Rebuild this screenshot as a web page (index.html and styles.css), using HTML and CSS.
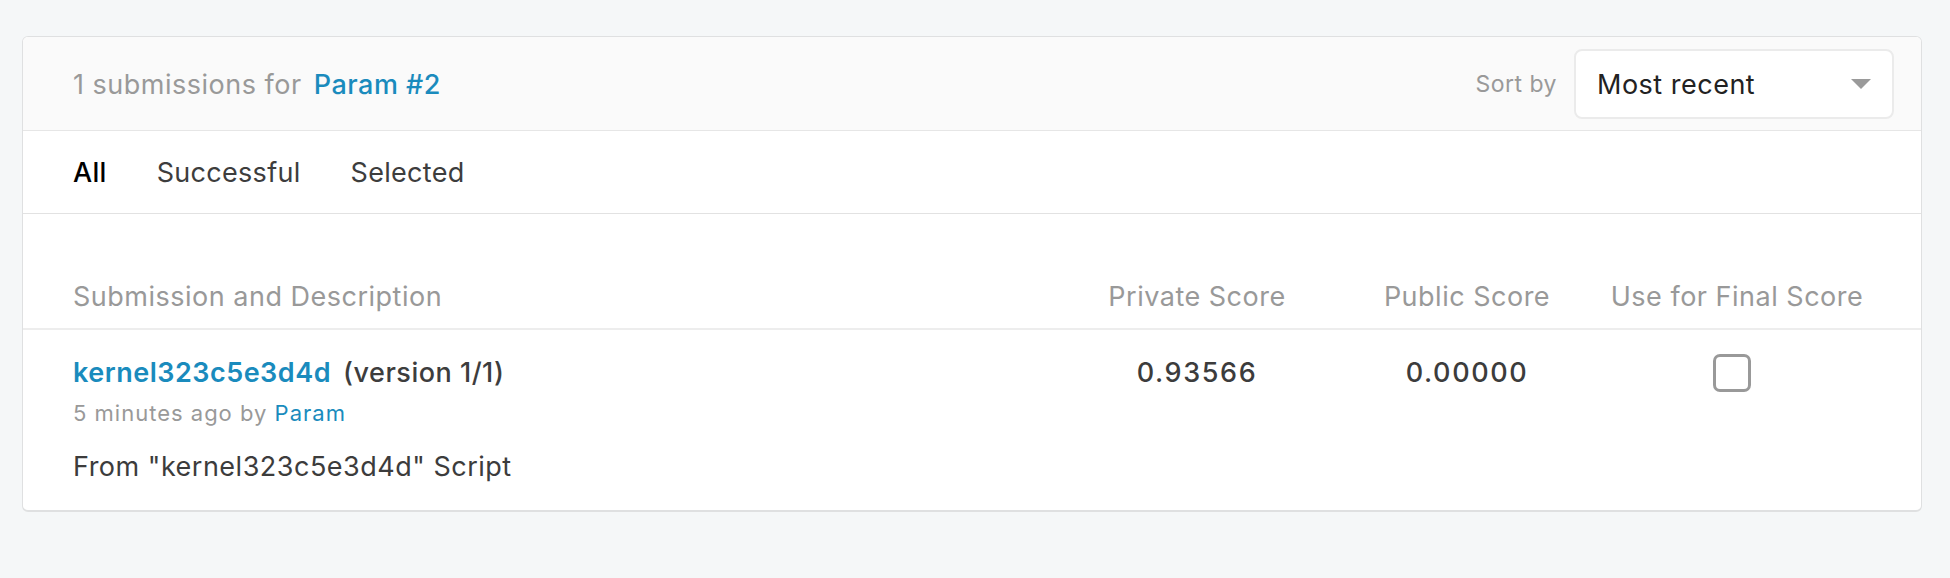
FILE: index.html
```html
<!DOCTYPE html>
<html lang="en">
<head>
<meta charset="utf-8">
<title>Submissions</title>
<link rel="stylesheet" href="styles.css">
</head>
<body>
<div class="page">
  <section class="card">
    <header class="card-header">
      <div class="count"><span class="count-label">1 submissions for</span> <a class="link team" href="#">Param #2</a></div>
      <div class="sort">
        <span class="sort-label">Sort by</span>
        <div class="select">
          <span class="select-value">Most recent</span>
          <span class="caret"></span>
        </div>
      </div>
    </header>
    <nav class="tabs">
      <span class="tab active">All</span>
      <span class="tab">Successful</span>
      <span class="tab">Selected</span>
    </nav>
    <div class="table">
      <div class="thead">
        <div class="th th-left">Submission and Description</div>
        <div class="th">Private Score</div>
        <div class="th">Public Score</div>
        <div class="th">Use for Final Score</div>
      </div>
      <div class="row">
        <div class="cell-desc">
          <div class="sub-title"><a class="link kernel" href="#">kernel323c5e3d4d</a> <span class="version">(version 1/1)</span></div>
          <div class="meta">5 minutes ago by <a class="link" href="#">Param</a></div>
          <div class="desc">From "kernel323c5e3d4d" Script</div>
        </div>
        <div class="score">0.93566</div>
        <div class="score">0.00000</div>
        <div class="check-cell"><span class="checkbox"></span></div>
      </div>
    </div>
  </section>
</div>
</body>
</html>
```

FILE: styles.css
```css
* { box-sizing: border-box; }
html, body { margin: 0; padding: 0; }
body {
  background: #f5f7f8;
  font-family: Inter, "Noto Sans", "Liberation Sans", sans-serif;
  color: #3c3c3c;
  letter-spacing: 0.5px;
}
.page {
  padding: 36px 28px 60px 22px;
}
.card {
  background: #fff;
  border: 1px solid #dfe0e1;
  border-bottom-width: 2px;
  border-radius: 6px;
  overflow: hidden;
}
.link { color: #1a8bbd; text-decoration: none; }

.card-header {
  display: flex;
  align-items: center;
  justify-content: space-between;
  background: #fafafa;
  border-bottom: 1px solid #e6e6e6;
  padding: 12px 27px 11px 50px;
}
.count { font-size: 27px; line-height: 33px; color: #999; }
.count-label { margin-right: 4px; }
.team { font-weight: 500; }
.sort { display: flex; align-items: center; gap: 17px; }
.sort-label { font-size: 23px; color: #999; }
.select {
  width: 320px;
  height: 70px;
  display: flex;
  align-items: center;
  justify-content: space-between;
  padding: 0 21px 0 21px;
  background: #fff;
  border: 2px solid #ebebeb;
  border-radius: 8px;
}
.select-value { font-size: 27px; color: #222; }
.caret {
  width: 0; height: 0;
  border-left: 10px solid transparent;
  border-right: 10px solid transparent;
  border-top: 10px solid #9a9a9a;
}

.tabs {
  display: flex;
  gap: 50px;
  align-items: center;
  height: 83px;
  padding: 0 50px;
  border-bottom: 1px solid #e2e2e2;
}
.tab { font-size: 27px; line-height: 33px; color: #3d3d3d; letter-spacing: 0.3px; }
.tab.active { color: #000; font-weight: 500; }

.thead, .row {
  display: grid;
  grid-template-columns: 1fr 270px 270px 270px;
  padding: 0 49px 0 50px;
}
.thead {
  padding-top: 66px;
  padding-bottom: 15px;
  border-bottom: 2px solid #ededed;
}
.th { font-size: 27px; line-height: 33px; color: #999; text-align: center; }
.th-left { text-align: left; }

.row { padding-top: 26px; padding-bottom: 27px; }
.sub-title { font-size: 27px; line-height: 33px; }
.kernel { font-weight: 600; margin-right: 4px; }
.version { font-weight: 500; color: #3d3d3d; }
.meta { font-size: 22px; line-height: 27px; color: #999; margin-top: 11px; letter-spacing: 1px; }
.desc { font-size: 27px; line-height: 33px; color: #3c3c3c; margin-top: 23px; }
.score {
  font-size: 27px;
  line-height: 33px;
  font-weight: 500;
  text-align: center;
  color: #3c3c3c;
  letter-spacing: 1.6px;
}
.check-cell {
  display: flex;
  justify-content: center;
  align-items: center;
  height: 33px;
}
.checkbox {
  display: block;
  flex: none;
  width: 38px;
  height: 38px;
  border: 3px solid #999;
  border-radius: 7px;
  margin-right: 10px;
  background: #fff;
}
```
